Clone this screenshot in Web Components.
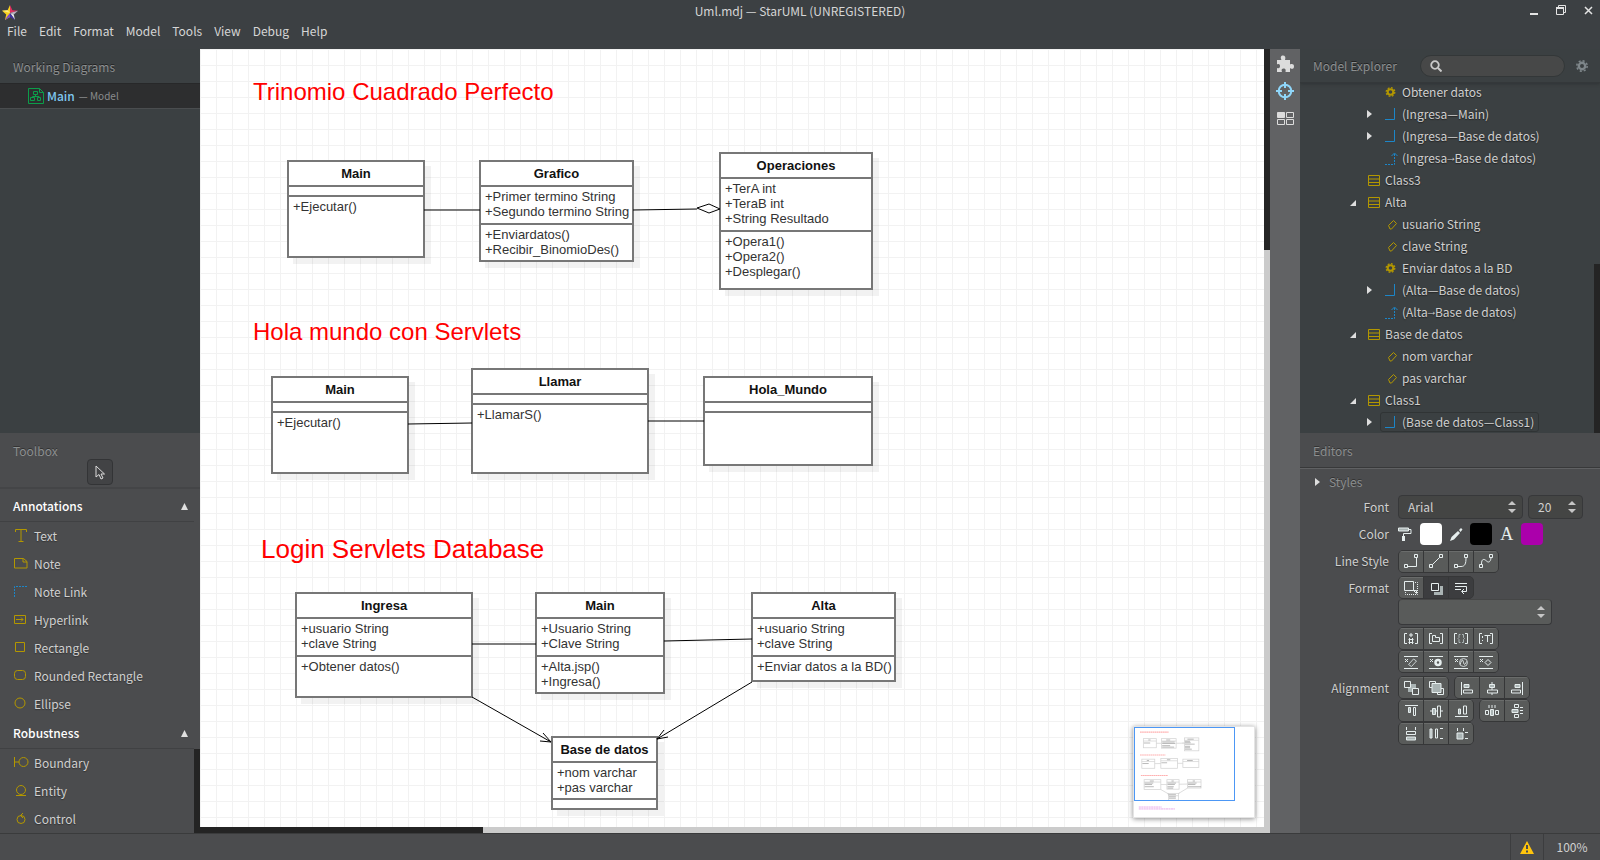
<!DOCTYPE html>
<html lang="es">
<head>
<meta charset="utf-8">
<title>Uml.mdj — StarUML (UNREGISTERED)</title>
<style>
html,body{margin:0;height:100%}
body{font:12px/20px "Noto Sans CJK SC","Noto Sans",sans-serif;color:#d0d0d0;background:#4b4c4e}
</style>
</head>
<body>
<star-app></star-app>
<script>
const L='#e6eeee', G='#aab4b4', Y='#b39700', B='#1c86c8';
const ends=`<path d="M.5 10.5h3v3h-3zM10.5.5h3v3h-3z"/>`;
const marks=`<path d="M0 .5h14M0 12.5h14"/><path d="M1 3l3 3M4 3L1 6" stroke-width="1"/>`;
const brackets=`<path d="M3 .5H.5v10H3M11 .5h2.500v10H11"/>`;
/* Each icon: width, height, stroke colour, drawing */
const ICONS={
 star:[16,15,'none',`<path fill="#f8d020" d="M8 0L5.600 5.200 0 5.800 4.200 9.400 3 15 8 12z"/><path fill="#e03060" d="M8 0l2.400 5.200L16 5.800 8 8z"/><path fill="#b9b0c0" d="M16 5.800l-4.200 3.600L8 8z"/><path fill="#e8e4ea" d="M11.800 9.400L13 15 8 8z"/><path fill="#4030a0" d="M8 8v4l5 3z"/><path fill="#7848c8" d="M3 15l2.500-4L8 8v4z"/><path fill="#fff080" d="M0 5.800l5.600-.6L8 8z"/>`],
 min:[9,12,'none',`<path fill="#e4e4e4" d="M0 8h8v2H0z"/>`],
 restore:[11,11,'#e4e4e4',`<path d="M2.500 2V.5h7v7H8"/><path d="M.5 3h7v6.500h-7z"/><path d="M0 3h8" stroke-width="2"/>`],
 close:[9,9,'#e4e4e4',`<path stroke-width="1.500" d="M1 1l7 7M8 1L1 8"/>`],
 diagram:[16,16,'#0c9d4a',`<path d="M.5.5h11l4 4v11H.5z"/><path d="M11.500.5v4h4M5.500 3.500h4v3h-4zM2.500 9.500h4v3h-4zM9.500 9.500h3v3h-3zM7.500 7v1.500M4.500 9.500v-1h6.500v1"/>`],
 pointer:[10,15,'#dcdcdc',`<path d="M1 1v11l3-2.500L6 14l2-1-2-4h3.500z"/>`],
 up:[7,7,'none',`<path fill="#e0e0e0" d="M3.500 0L7 7H0z"/>`],
 right:[5,8,'none',`<path fill="#dedede" d="M0 0l5 4-5 4z"/>`],
 open:[7,7,'none',`<path fill="#dedede" d="M6 1v6H0z"/>`],
 text:[14,13,Y,`<path d="M1.500 3V.5h11V3M7 .5v12M4.500 12.500h5"/>`],
 note:[14,13,Y,`<path d="M.5 1.500h9l3.500 3v6.500H.5zM9 1.500v3.500h4"/>`],
 notelink:[14,13,B,`<path stroke-dasharray="2 1" d="M.5 12V1.500H14"/>`],
 hyperlink:[14,13,Y,`<path d="M.5 2.500h11v8H.5zM2 6.500h7M7 4.500l2 2-2 2"/>`],
 rectangle:[14,13,Y,`<path d="M1.500 1.500h9v9h-9z"/>`],
 rounded:[14,13,Y,`<rect x=".5" y="1.500" width="11" height="9" rx="3"/>`],
 ellipse:[14,13,Y,`<circle cx="6" cy="6" r="5"/>`],
 boundary:[15,13,Y,`<path d="M.5 1v10M0 6h5"/><circle cx="9.500" cy="6" r="4.500"/>`],
 entity:[14,13,Y,`<circle cx="7" cy="6" r="4.500"/><path d="M2 11.500h10"/>`],
 control:[14,13,Y,`<circle cx="7" cy="7.500" r="4"/><path d="M9 1L6.500 3.500 9 6"/>`],
 puzzle:[18,18,'none',`<path fill="#dcdcdc" d="M1 5h4.500C4 2 5 .5 7 .5S10 2 9 5h5v4.500c2-1 4-.5 4 2s-2 3-4 1.500V17H9.500c.6-3-.5-3.500-2-3.500S5 14.500 6 17H1v-4c2.500.8 3-.5 3-2s-1-2.600-3-1.500z"/>`],
 target:[18,18,'#8fd6fa',`<circle cx="9" cy="9" r="6.300" stroke-width="2"/><path stroke-width="2" d="M9 0v6M9 12v6M0 9h6M12 9h6"/>`],
 tiles:[18,14,'#dcdcdc',`<path fill="#dcdcdc" d="M1.500 1.500h7v5h-7z"/><path d="M10.500 1.500h7v5h-7zM1.500 8.500h7v5h-7zM10.500 8.500h7v5h-7z"/>`],
 search:[12,12,'#c9c9c9',`<circle cx="5" cy="5" r="3.800" stroke-width="1.800"/><path stroke-width="2" d="M8 8l3.500 3.500"/>`],
 gear:[12,12,'#7e868a',`<circle cx="6" cy="6" r="3.200" stroke-width="2.400"/><circle cx="6" cy="6" r="5.200" stroke-width="1.500" stroke-dasharray="2.080 2"/>`],
 op:[12,12,Y,`<circle cx="5.500" cy="6" r="2.800" stroke-width="2"/><circle cx="5.500" cy="6" r="4.300" stroke-width="1.300" stroke-dasharray="1.800 1.570"/>`],
 assoc:[12,12,B,`<path d="M0 11.500h9.500V0"/>`],
 dep:[13,13,B,`<path stroke-dasharray="2 1" d="M0 12.500h9.500V1"/><path d="M6.500 4l3-3 3 3"/>`],
 cls:[12,11,Y,`<path d="M.5.5h11v10H.5zM0 4h12M0 7.500h12"/>`],
 attr:[12,12,Y,`<path d="M3.500 7.500l5-5 3 3-5 5.500h-1.500z"/>`],
 updown:[8,12,'none',`<path fill="#c6c6c6" d="M4 0l4 4H0zM4 12L0 8h8z"/>`],
 roller:[14,14,'none',`<path fill="${G}" stroke="${L}" d="M.5 1h10v3H.500z"/><path fill="none" stroke="${L}" d="M11 2.500h2v4H5.500V9"/><path fill="${L}" d="M4 9h3v5H4z"/>`],
 pen:[13,13,'none',`<path fill="${L}" d="M0 13l1.500-4L8 3l2 2-6 6.500zM9 2l2-2 1.500 1.500-2 2.500z"/>`],
 l1:[15,15,L,ends+`<path d="M4 12.500h8.500V4"/>`],
 l2:[15,15,L,ends+`<path d="M3.500 10.500l7-7"/>`],
 l3:[15,15,L,ends+`<path d="M4 12.500h3c4 0 5-3 5-8.500"/>`],
 l4:[15,15,L,ends+`<path d="M2.500 10c0-6 3-5 5-3s4 1 4.500-3"/>`],
 f1:[15,15,L,`<path d="M.5.5h9v9h-9z"/><path stroke-dasharray="1 1" d="M11 1.500h2.500v12h-12v-3"/><path d="M9.500 9.500l3 3v-3z"/>`],
 f2:[15,15,L,`<path stroke="none" fill="${G}" d="M11 5h3v9H5v-3h6z"/><path d="M2.500 2.500h7v7h-7z"/>`],
 f3:[15,15,L,`<path d="M1 2.500h12M1 5.500h11.500v5H8M1 8.500h6M10 8l-2.500 2.500L10 13"/>`],
 b1:[14,12,L,brackets+`<path d="M7 0v4M5 2h4M5.500 5v6M8.500 5v6M4.500 6.500h5M4.500 9.500h5"/>`],
 b2:[14,12,L,brackets+`<path d="M3.500 8.500v-6h3v2h4v4z"/>`],
 b3:[14,12,L,brackets+`<path d="M6.500 1.500H5v3l-1 1 1 1v3h1.500M8 1.500h1.500v3l1 1-1 1v3H8" stroke="${G}"/>`],
 b4:[14,12,L,brackets+`<path d="M5.500 2.500h6M8.500 3v6"/><path stroke-dasharray="2 2" d="M3.500 3v5"/>`],
 v1:[14,13,L,marks+`<path d="M4.500 8.500L9.500 3l3 2-5 5.500z" stroke="#c8d0d0"/>`],
 v2:[14,13,L,marks+`<circle cx="9" cy="6.500" r="2.500" stroke-width="2.500"/>`],
 v3:[14,13,L,marks+`<circle cx="9.500" cy="6.500" r="4" stroke="#c8d0d0"/><path d="M6 8.500c2-6 3-5 3.500-2s2 2 3-1"/>`],
 v4:[14,13,L,marks+`<path d="M9 3.500l3 3-3 3-3-3z"/>`],
 a1:[15,15,L,`<path stroke="none" fill="${G}" d="M4 3h8v8H4z"/><path fill="#5a5c5b" d="M.5.5h6v6h-6zM8.500 7.500h6v6h-6z"/>`],
 a2:[15,15,L,`<path d="M.5.5h6v6h-6zM8.500 7.500h6v6h-6z"/><path stroke="${L}" fill="${G}" d="M3 2.500h9v9H3z"/>`],
 a3:[12,13,L,`<path d="M.5 0v13"/><path fill="${G}" d="M3 2.500h5v3H3z"/><path d="M2.500 8h9v3h-9z"/>`],
 a4:[13,13,L,`<path fill="${G}" d="M3.500 2.500h5v3h-5z"/><path d="M6 0v2M6 6v2M6 11v2M1.500 8h10v3h-10z"/>`],
 a5:[12,13,L,`<path d="M11.500 0v13"/><path fill="${G}" d="M4 2.500h5v3H4z"/><path d="M.5 8h9v3H.5z"/>`],
 a6:[13,13,L,`<path d="M0 .5h13M8.500 2.500h2v8h-2z"/><path fill="${G}" d="M3.500 2.500h2v5h-2z"/>`],
 a7:[13,13,L,`<path d="M0 6h13"/><path fill="${G}" d="M2.500 3.500h3v6h-3z"/><path fill="#5a5c5b" d="M7.500 1h3v11h-3z"/>`],
 a8:[13,13,L,`<path d="M0 11.500h13M8.500 1h3v8h-3z"/><path fill="${G}" d="M3.500 4h2v5h-2z"/>`],
 a9:[14,13,L,`<path d="M4 0v3M7 0v3M10 0v3M.5 5.500h3v4h-3zM10.500 5.500h3v4h-3z"/><path fill="${G}" d="M5.500 4.500h3v6h-3z"/>`],
 a10:[13,14,L,`<path d="M3.500.5h4v3h-4zM3.500 10.500h4v3h-4zM9 3.500h3M9 6.500h3M9 9.500h3"/><path fill="${G}" d="M1 5.500h6v3H1z"/>`],
 a11:[12,14,L,`<path d="M1.500 0v3M10.500 0v3M1.500 4.500h9v3h-9z"/><path fill="${G}" d="M1.500 10h9v3h-9z"/>`],
 a12:[14,12,L,`<path d="M6.500 1h2v9h-2zM14 .5h-3M14 10.500h-3"/><path fill="${G}" d="M1 1h2v9H1z"/>`],
 a13:[13,13,L,`<path d="M2.500 0v3M8.500 0v3M13 4.500h-3M13 10.500h-3"/><path fill="${G}" d="M2 5h6v6H2z"/>`],
 warn:[14,13,'none',`<path fill="#ffc40c" d="M7 0l7 13H0z"/><path fill="#4b4c4e" d="M6 4h2v4H6zM6 9.500h2v2H6z"/>`]
};
const ic=n=>{const[w,h,s,d]=ICONS[n];return `<svg aria-hidden="true" width="${w}" height="${h}" viewBox="0 0 ${w} ${h}" fill="none" stroke="${s}">${d}</svg>`};
const RESET=`*{box-sizing:border-box}button,select,input{font:inherit;color:inherit;margin:0;padding:0;border:0;background:none}svg{display:block;flex:none}ul{list-style:none;margin:0;padding:0}h2,h3{margin:0;font:inherit}`;
const define=(tag,css,html,init)=>customElements.define(tag,class extends HTMLElement{
  connectedCallback(){
    if(this.shadowRoot)return;
    const r=this.attachShadow({mode:'open'});
    r.innerHTML=`<style>${RESET}${css}</style>${typeof html==='function'?html(this):html}`;
    if(init)init(this,r);
  }
});

define('title-bar',`
:host{display:block;background:#3c4043;color:#d6d6d6;height:49px}
.top{display:grid;grid-template-columns:1fr auto 1fr;height:21px;align-items:center}
.star{padding:4px 0 0 2px}
.win{display:flex;justify-content:flex-end;gap:10px;padding-right:3px}
.win button{width:17px;height:16px;display:grid;place-items:center}
nav{display:flex;height:20px;padding-left:1px}
nav button{padding:0 6px;line-height:20px}
`,`<div class="top"><span class="star">${ic('star')}</span><span class="title">Uml.mdj — StarUML (UNREGISTERED)</span>
<div class="win"><button aria-label="Minimize">${ic('min')}</button><button aria-label="Restore">${ic('restore')}</button><button aria-label="Close">${ic('close')}</button></div></div>
<nav>${['File','Edit','Format','Model','Tools','View','Debug','Help'].map(t=>`<button>${t}</button>`).join('')}</nav>`);

define('working-diagrams',`
:host{display:block;background:#3b4042}
h2{height:34px;line-height:36px;padding-left:13px;color:#8c8f90;text-shadow:0 -1px #222}
a{display:flex;align-items:center;height:26px;padding-left:28px;background:#2d2e2f;border-top:1px solid #272829;border-bottom:1px solid #4a4d4f;color:#8a8c8d;text-decoration:none;font-size:10px}
b{font-size:12px;font-weight:500;color:#7fc8f0;margin:0 4px 0 3px}
`,`<h2>Working Diagrams</h2><a href="#main">${ic('diagram')}<b>Main</b> — Model</a>`);

define('tool-item',`
:host{display:block}
button{display:flex;align-items:center;width:100%;height:28px;padding-left:14px;text-align:left;color:#d0d0d0;text-shadow:0 1px 1px #333}
span{width:20px;padding-bottom:2px}
`,e=>`<button><span>${ic(e.getAttribute('icon'))}</span><slot></slot></button>`);

define('tool-box',`
:host{display:flex;flex-direction:column;background:#4b4c4e;overflow:hidden}
header{height:56px;border-bottom:2px solid #444547;position:relative;flex:none}
h2{line-height:36px;padding-left:13px;color:#8c8f90;text-shadow:0 -1px #333}
.sel{position:absolute;left:87px;top:26px;width:26px;height:26px;border:1px solid #333436;border-radius:4px;background:#424345;display:grid;place-items:center}
.list{display:flex;flex:1;min-height:0;overflow:hidden}
.items{flex:1;min-width:0}
.bar{width:6px;background:linear-gradient(#4b4c4e 260px,#242424 260px)}
h3{display:flex;align-items:center;justify-content:space-between;height:31px;padding:0 6px 0 13px;border-bottom:1px solid #404143;color:#fff;font-weight:500}
h3:first-child{height:33px;padding-top:2px}
`,`<header><h2>Toolbox</h2><button class="sel" aria-label="Select">${ic('pointer')}</button></header>
<div class="list"><div class="items">
<h3>Annotations${ic('up')}</h3>
${[['text','Text'],['note','Note'],['notelink','Note Link'],['hyperlink','Hyperlink'],['rectangle','Rectangle'],['rounded','Rounded Rectangle'],['ellipse','Ellipse']].map(([i,t])=>`<tool-item icon="${i}">${t}</tool-item>`).join('')}
<h3>Robustness${ic('up')}</h3>
${[['boundary','Boundary'],['entity','Entity'],['control','Control']].map(([i,t])=>`<tool-item icon="${i}">${t}</tool-item>`).join('')}
</div><div class="bar"></div></div>`);

/* x, y, width, height, name, attributes, operations (canvas units) */
const NODES=[
 [88,112,136,96,'Main',[],['+Ejecutar()']],
 [280,112,153,100,'Grafico',['+Primer termino String','+Segundo termino String'],['+Enviardatos()','+Recibir_BinomioDes()']],
 [520,104,152,136,'Operaciones',['+TerA int','+TeraB int','+String Resultado'],['+Opera1()','+Opera2()','+Desplegar()']],
 [72,328,136,96,'Main',[],['+Ejecutar()']],
 [272,320,176,104,'Llamar',[],['+LlamarS()']],
 [504,328,168,88,'Hola_Mundo',[],[]],
 [96,544,176,104,'Ingresa',['+usuario String','+clave String'],['+Obtener datos()']],
 [336,544,128,100,'Main',['+Usuario String','+Clave String'],['+Alta.jsp()','+Ingresa()']],
 [552,544,143,88,'Alta',['+usuario String','+clave String'],['+Enviar datos a la BD()']],
 [352,688,105,72,'Base de datos',['+nom varchar','+pas varchar'],[]]
];
const EDGES=`<path d="M224 161h56M433 161l64-1M497 159l12-4 11 5-11 4zM208 375l64-1M448 372h56M272 595h64M464 592l88-2M272 648l79 45M343 684l8 9-11-1M552 633l-95 57M464 681l-7 9 11-2"/>`;

define('uml-class',`
:host{position:absolute;display:flex;flex-direction:column;border:2px solid #777;background:#fff;color:#333;box-shadow:6px 6px rgba(0,0,0,.05);font:13px/15px "Liberation Sans",Arial,sans-serif}
.n{text-align:center;font-weight:bold;color:#111;height:23px;line-height:23px;flex:none}
.c{border-top:2px solid #777;padding:2px 4px 4px;min-height:10px;white-space:nowrap}
::slotted(div){display:block}
`,`<div class="n"><slot name="name"></slot></div><div class="c"><slot name="attrs"></slot></div><div class="c"><slot></slot></div>`);

define('mini-map',`
:host{display:block;width:122px;height:92px;background:#fff;border:1px solid #e4e4e4;box-shadow:0 1px 5px rgba(0,0,0,.45)}
`,()=>{
 const k=.095;
 const boxes=NODES.map(([x,y,w,h,n,a,o])=>`<rect x="${x}" y="${y}" width="${w}" height="${h}" fill="#fff"/><path d="M${x} ${y+25}h${w}"/>`+
  [[n,x+w/2-n.length*4,y+14]].concat(a.map((t,i)=>[t,x+6,y+36+i*15]),o.map((t,i)=>[t,x+6,y+(a.length?a.length*15+44:46)+i*15])).map(([t,tx,ty])=>`<path stroke="#999" stroke-width="7" d="M${tx} ${ty}h${t.length*6}"/>`).join('')).join('');
 return `<svg width="120" height="90" viewBox="0 0 120 90" fill="none"><g transform="translate(1 1) scale(${k})"><g stroke="#d4d4d4" stroke-width="8">${boxes}${EDGES}</g><path stroke="#ffb0b0" stroke-width="12" stroke-dasharray="18 4" d="M53 44h300M53 284h268M62 500h283"/><path stroke="#e8a8e8" stroke-width="10" stroke-dasharray="22 4" d="M40 832h240M40 852h380"/></g><rect x=".5" y=".5" width="100" height="73" stroke="#4c97f5"/></svg>`;
});

define('diagram-canvas',`
:host{display:grid;grid-template-columns:1fr 6px;grid-template-rows:1fr 6px;min-width:0;min-height:0}
.area{position:relative;overflow:hidden;background:linear-gradient(to right,#f2f2f2 1px,transparent 1px) 0 0/16px 16px,linear-gradient(#f2f2f2 1px,transparent 1px) 0 0/16px 16px,#fff}
.edges{position:absolute;left:0;top:0}
.t{position:absolute;color:#f00;font:24px/28px "Liberation Sans",Arial,sans-serif;white-space:nowrap}
.big{font-size:26px}
mini-map{position:absolute;right:9px;bottom:9px}
.v{background:linear-gradient(#242424 201px,#cbcbcb 201px)}
.h{grid-column:1/3;background:linear-gradient(to right,#242424 283px,#cbcbcb 283px)}
`,()=>`<div class="area">
<div class="t" style="left:53px;top:29px">Trinomio Cuadrado Perfecto</div>
<div class="t" style="left:53px;top:269px">Hola mundo con Servlets</div>
<div class="t big" style="left:61px;top:486px">Login Servlets Database</div>
${NODES.map(([x,y,w,h,n,a,o])=>`<uml-class style="left:${x-1}px;top:${y-1}px;width:${w+2}px;height:${h+2}px;box-sizing:border-box"><span slot="name">${n}</span>${a.map(t=>`<div slot="attrs">${t}</div>`).join('')}${o.map(t=>`<div>${t}</div>`).join('')}</uml-class>`).join('')}
<svg class="edges" width="1064" height="778" fill="none" stroke="#000">${EDGES}</svg>
<mini-map></mini-map></div><div class="v"></div><div class="h"></div>`);

define('tool-rail',`
:host{display:flex;flex-direction:column;align-items:center;gap:9px;background:#616264;padding-top:6px}
button{display:grid;place-items:center;width:30px;height:18px}
`,`<button aria-label="Extensions">${ic('puzzle')}</button><button aria-label="Locate">${ic('target')}</button><button aria-label="Views">${ic('tiles')}</button>`);

define('tree-row',`
:host{display:grid;grid-template-columns:17px 1fr;align-items:center;height:22px;color:#d0d0d0;text-shadow:0 1px 1px #222}
:host([depth="1"]){padding-left:50px}
:host([depth="2"]){padding-left:67px}
.lab{display:flex;align-items:center;justify-self:start;height:20px;border:1px solid transparent;border-radius:3px;padding:0 4px;margin-left:-4px}
.i{width:17px}
:host([selected]) .lab{border-color:#303435}
::slotted(span){font-family:"Liberation Mono",monospace}
`,e=>`<span>${e.getAttribute('mark')?ic(e.getAttribute('mark')):''}</span><span class="lab"><span class="i">${ic(e.getAttribute('icon'))}</span><slot></slot></span>`);

define('model-explorer',`
:host{display:flex;flex-direction:column;background:#3b4042;overflow:hidden}
header{display:flex;align-items:center;height:34px;padding:0 12px 0 13px;flex:none;border-bottom:1px solid #34383a;box-shadow:0 1px 3px #2f3335;position:relative;z-index:1;background:#3b4042}
h2{flex:1;color:#8c8f90;text-shadow:0 -1px #222}
label{display:flex;align-items:center;width:145px;height:22px;border-radius:11px;background:#474848;border:1px solid #333738;padding-left:9px;margin-right:11px}
input{flex:1;min-width:0;outline:0;padding-left:8px}
.body{display:flex;flex:1;min-height:0}
ul{flex:1;display:flex;flex-direction:column;justify-content:flex-end;overflow:hidden}
li{flex:none}
.bar{width:6px;background:linear-gradient(#3b4042 181px,#242424 181px)}
`,`<header><h2>Model Explorer</h2><label>${ic('search')}<input type="search" aria-label="Search"></label><button aria-label="Settings">${ic('gear')}</button></header>
<div class="body"><ul>${[
 [2,'','op','Obtener datos'],[2,'right','assoc','(Ingresa—Main)'],[2,'right','assoc','(Ingresa—Base de datos)'],[2,'','dep','(Ingresa→Base de datos)'],
 [1,'','cls','Class3'],[1,'open','cls','Alta'],[2,'','attr','usuario String'],[2,'','attr','clave String'],[2,'','op','Enviar datos a la BD'],
 [2,'right','assoc','(Alta—Base de datos)'],[2,'','dep','(Alta→Base de datos)'],[1,'open','cls','Base de datos'],[2,'','attr','nom varchar'],[2,'','attr','pas varchar'],
 [1,'open','cls','Class1'],[2,'right','assoc','(Base de datos—Class1)',1]
].map(([d,m,i,t,s])=>`<li><tree-row depth="${d}" mark="${m}" icon="${i}"${s?' selected':''}>${t.replace('→','<span>→</span>')}</tree-row></li>`).join('')}</ul><div class="bar"></div></div>`);

define('button-group',`
:host{display:flex;border:1px solid #363738;border-radius:5px;overflow:hidden;background:#363738;gap:1px}
button{width:24px;height:21px;display:grid;place-items:center;background:#595b5a;border-top:1px solid #6a6c6b}
button.on{background:#3c3d3f;border-top-color:#3c3d3f}
`,e=>e.getAttribute('icons').split(' ').map(n=>`<button class="${(e.getAttribute('on')||'').split(' ').includes(n)?'on':''}" aria-label="${n}">${ic(n)}</button>`).join(''));

define('style-editors',`
:host{display:block;background:#4b4c4e;overflow:hidden}
h2{height:35px;line-height:36px;padding-left:13px;color:#8c8f90;text-shadow:0 -1px #333;border-bottom:1px solid #38393a;box-shadow:0 1px #606163}
h3{display:flex;align-items:center;gap:9px;height:27px;padding:0 0 0 15px;color:#8c8f90;text-shadow:0 -1px #333}
.form{display:grid;grid-template-columns:89px 1fr;column-gap:9px;row-gap:3px}
.lb{text-align:right;text-shadow:0 1px 1px #333;align-self:start;line-height:24px}
.row{display:flex;align-items:center;gap:5px;min-height:23px}
.col{display:flex;flex-direction:column}
.sel{position:relative;display:inline-flex;align-items:center;vertical-align:top}
.sel svg{position:absolute;right:7px;pointer-events:none}
select{appearance:none;height:24px;border:1px solid #37383a;border-radius:4px;background:#444544;padding-left:9px}
.f{width:125px}.s{width:55px}.w{width:154px;height:26px;background:#595b5a;border-top-color:#454646}
.sw{width:22px;height:22px;border-radius:4px}
.colors{gap:0;height:24px;justify-content:space-between;width:145px}
.a{font:18px/20px "Liberation Serif",serif;color:#e6eeee}
.mt{margin-top:2px}
`,`<h2>Editors</h2><h3>${ic('right')}Styles</h3>
<div class="form">
<label class="lb" for="font">Font</label><div class="row"><span class="sel"><select class="f" id="font"><option>Arial</option></select>${ic('updown')}</span><span class="sel"><select class="s" id="size" aria-label="Font size"><option>20</option></select>${ic('updown')}</span></div>
<span class="lb">Color</span><div class="row colors">${ic('roller')}<button class="sw" aria-label="Fill color" style="background:#fff"></button>${ic('pen')}<button class="sw" aria-label="Line color" style="background:#000"></button><span class="a" aria-hidden="true">A</span><button class="sw" aria-label="Font color" style="background:#ab00ab"></button></div>
<span class="lb">Line Style</span><div class="row"><button-group icons="l1 l2 l3 l4"></button-group></div>
<label class="lb" for="stereo">Format</label><div class="col"><div class="row"><button-group icons="f1 f2 f3" on="f2 f3"></button-group></div>
<div><span class="sel"><select class="w" id="stereo"><option></option></select>${ic('updown')}</span></div>
<div class="row mt"><button-group icons="b1 b2 b3 b4"></button-group></div><div class="row"><button-group icons="v1 v2 v3 v4"></button-group></div></div>
<span class="lb">Alignment</span><div class="col"><div class="row"><button-group icons="a1 a2"></button-group><button-group icons="a3 a4 a5"></button-group></div>
<div class="row"><button-group icons="a6 a7 a8"></button-group><button-group icons="a9 a10"></button-group></div>
<div class="row"><button-group icons="a11 a12 a13"></button-group></div></div>
</div>`);

define('status-bar',`
:host{display:flex;justify-content:flex-end;height:27px;background:#4b4c4e;border-top:1px solid #3a3b3c}
button{display:grid;place-items:center;border-left:1px solid #3c3d3f}
.w{width:33px}.z{width:57px}
`,`<button class="w" aria-label="Warnings">${ic('warn')}</button><button class="z">100%</button>`);

define('star-app',`
:host{display:grid;grid-template-rows:auto 1fr auto;height:100vh}
main{display:grid;grid-template-columns:200px 1fr 30px 300px;min-height:0}
.side{display:flex;flex-direction:column;min-height:0;min-width:0}
.side>:first-child{flex:24 1 0;min-height:0}
.side>:last-child{flex:25 1 0;min-height:0}
`,`<title-bar></title-bar><main>
<div class="side"><working-diagrams></working-diagrams><tool-box></tool-box></div>
<diagram-canvas></diagram-canvas><tool-rail></tool-rail>
<div class="side"><model-explorer></model-explorer><style-editors></style-editors></div>
</main><status-bar></status-bar>`);
</script>
</body>
</html>
